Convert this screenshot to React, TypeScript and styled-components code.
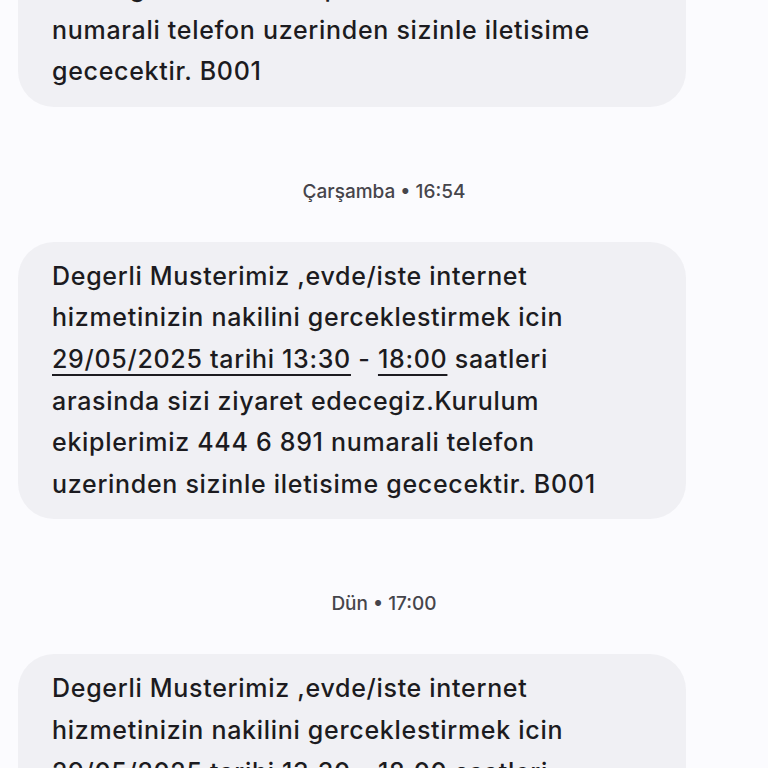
import React from 'react';
import styled, { createGlobalStyle } from 'styled-components';

const GlobalStyle = createGlobalStyle`
  html, body {
    margin: 0;
    padding: 0;
    background: #fbfbfe;
    overflow: hidden;
  }
  * { box-sizing: border-box; }
`;

const Thread = styled.div`
  width: 768px;
  height: 768px;
  overflow: hidden;
  background: #fbfbfe;
  display: flex;
  flex-direction: column;
  font-family: Inter, 'Open Sans', sans-serif;
`;

const Bubble = styled.div<{ $offset?: number }>`
  flex: none;
  margin: ${(p) => p.$offset ?? 0}px 82px 0 18px;
  background: #f0f0f4;
  border-radius: 36px;
  padding: 14px 20px 14px 34px;
  color: #1c1b20;
  font-size: 25px;
  font-weight: 550;
  letter-spacing: 0.7px;
  line-height: 41.6px;
  white-space: nowrap;
`;

const Line = styled.div`
  display: block;
`;

const Link = styled.span`
  text-decoration: underline;
  text-decoration-thickness: 2px;
  text-underline-offset: 6px;
`;

const Stamp = styled.div`
  flex: none;
  margin: 73px 0 38px;
  text-align: center;
  color: #46454b;
  font-size: 19px;
  font-weight: 500;
  line-height: 24px;
`;

type Part = { text: string; link?: boolean };

const full: Part[][] = [
  [{ text: 'Degerli Musterimiz ,evde/iste internet' }],
  [{ text: 'hizmetinizin nakilini gerceklestirmek icin' }],
  [
    { text: '29/05/2025 tarihi 13:30', link: true },
    { text: ' - ' },
    { text: '18:00', link: true },
    { text: ' saatleri' },
  ],
  [{ text: 'arasinda sizi ziyaret edecegiz.Kurulum' }],
  [{ text: 'ekiplerimiz 444 6 891 numarali telefon' }],
  [{ text: 'uzerinden sizinle iletisime gececektir. B001' }],
];

const earlier: Part[][] = [
  [{ text: 'edecegiz.Kurulum ekiplerimiz 444 6 891' }],
  [{ text: 'numarali telefon uzerinden sizinle iletisime' }],
  [{ text: 'gececektir. B001' }],
];

const Message: React.FC<{ lines: Part[][]; offset?: number }> = ({ lines, offset }) => (
  <Bubble $offset={offset}>
    {lines.map((parts, i) => (
      <Line key={i}>
        {parts.map((p, j) => (p.link ? <Link key={j}>{p.text}</Link> : <React.Fragment key={j}>{p.text}</React.Fragment>))}
      </Line>
    ))}
  </Bubble>
);

export default function App() {
  return (
    <>
      <GlobalStyle />
      <Thread>
        <Message lines={earlier} offset={-46} />
        <Stamp>Çarşamba • 16:54</Stamp>
        <Message lines={full} />
        <Stamp>Dün • 17:00</Stamp>
        <Message lines={full} />
      </Thread>
    </>
  );
}
